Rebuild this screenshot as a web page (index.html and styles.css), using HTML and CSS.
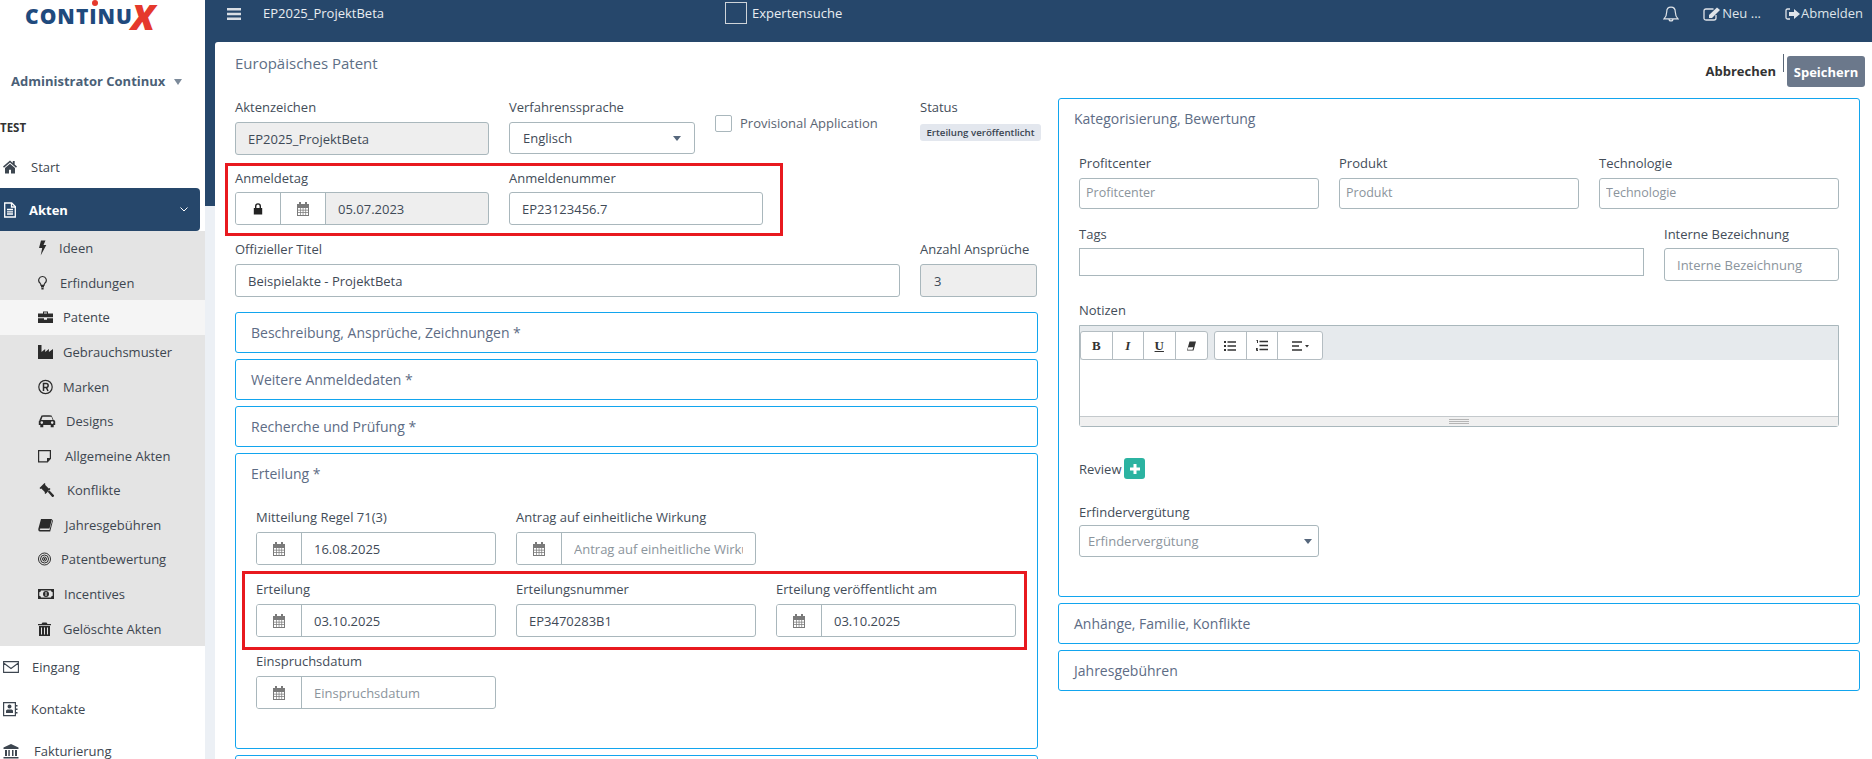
FILE: index.html
```html
<!DOCTYPE html>
<html lang="de">
<head>
<meta charset="utf-8">
<title>EP2025_ProjektBeta</title>
<link rel="stylesheet" href="styles.css">
</head>
<body>
<svg class="sprite" aria-hidden="true">
  <symbol id="cal" viewBox="0 0 12 14"><path fill="currentColor" fill-rule="evenodd" d="M2 0h2v2h4V0h2v2h2v12H0V2h2zM1 6v1.700h2V6zM3.700 6v1.700h2V6zM6.400 6v1.700h2V6zM9.100 6v1.700H11V6zM1 8.600v1.700h2V8.600zM3.700 8.600v1.700h2V8.600zM6.400 8.600v1.700h2V8.600zM9.100 8.600v1.700H11V8.600zM1 11.100V13h2v-1.900zM3.700 11.100V13h2v-1.900zM6.400 11.100V13h2v-1.900zM9.100 11.100V13H11v-1.900z"/></symbol>
  <symbol id="lock" viewBox="0 0 10 12"><path fill="currentColor" fill-rule="evenodd" d="M2 5V3.200a3 3 0 0 1 6 0V5h1.200v6.500H.8V5zM3.400 5h3.200V3.200a1.600 1.600 0 0 0-3.200 0z"/></symbol>
</svg>

<div class="app">
  <aside class="sidebar">
    <div class="logo"><span class="logo-word">CONTINU</span><span class="logo-x">X</span><i class="logo-dot"></i></div>
    <div class="user">Administrator Continux<i class="user-caret"></i></div>
    <div class="tenant">TEST</div>
    <nav class="menu">
      <a class="item"><svg class="ic" width="18" height="16" viewBox="0 0 18 16"><path fill="currentColor" d="M7 1.500 0 7.600l1 1.100L7 3.500l6 5.200 1-1.100-2.300-2V2H9.800v1.900zM2 9v5.500h4v-3.700h2v3.700h4V9L7 4.700z"/></svg><span>Start</span></a>
      <a class="item item-active"><svg class="ic" width="16" height="16" viewBox="0 0 16 16"><path fill="none" stroke="currentColor" stroke-width="1.300" d="M1.700 1h7l3.600 3.600V15H1.700z"/><path fill="none" stroke="currentColor" stroke-width="1.300" d="M8.500 1v4h4M4 7.500h6M4 9.800h6M4 12h6"/></svg><span>Akten</span><svg class="chev" width="8" height="5" viewBox="0 0 8 5"><path fill="none" stroke="currentColor" d="m.5.500 3.500 3.500 3.500-3.500"/></svg></a>
      <div class="submenu">
        <a class="sub"><svg class="ic" width="11" height="16" viewBox="0 0 11 16"><path fill="currentColor" d="M3 .500h4.500L5.500 5H8.300L2.700 15.500 4.200 8H1z"/></svg><span>Ideen</span></a>
        <a class="sub"><svg class="ic" width="12" height="16" viewBox="0 0 12 16"><path fill="none" stroke="currentColor" stroke-width="1.200" d="M4.500 1.500A3.700 3.700 0 0 0 2 8c.6.800.9 1.300 1 2.300h3c.1-1 .4-1.500 1-2.300a3.700 3.700 0 0 0-2.500-6.500z"/><path fill="currentColor" d="M3 11h3v1.500H3zM3.400 13h2.200v1.500H3.400z"/></svg><span>Erfindungen</span></a>
        <a class="sub sub-current"><svg class="ic" width="15" height="16" viewBox="0 0 15 16"><path fill="currentColor" fill-rule="evenodd" d="M5 2.500h5v2h5v3.800H0V4.500h5zM6 3.500v1h3v-1zM0 9.300h6v1.500h3V9.300h6V14H0z"/></svg><span>Patente</span></a>
        <a class="sub"><svg class="ic" width="15" height="16" viewBox="0 0 15 16"><path fill="currentColor" d="M0 1h3.500v7l3.700-3v3l3.700-3v3L15 5v10H0z"/></svg><span>Gebrauchsmuster</span></a>
        <a class="sub"><svg class="ic" width="15" height="16" viewBox="0 0 15 16"><circle cx="7.500" cy="8" r="6.700" fill="none" stroke="currentColor" stroke-width="1.200"/><path fill="none" stroke="currentColor" stroke-width="1.500" d="M5.500 12V4.500h2.700a1.900 1.900 0 0 1 0 3.900H5.500m2.800 0L10 12"/></svg><span>Marken</span></a>
        <a class="sub"><svg class="ic" width="18" height="16" viewBox="0 0 18 16"><path fill="currentColor" fill-rule="evenodd" d="M3.500 2.500c3-.5 7-.5 10 0l2 4.500H16c1 .5 1.200 1 1.200 1.700V12h-1.500v2.200h-3V12h-7.400v2.200h-3V12H.8V8.700c0-.7.200-1.200 1.200-1.700h-.5zM4.500 3.800 3.300 7h11.400l-1.200-3.200zM3.800 8.300a1.300 1.300 0 1 0 0 2.600 1.300 1.300 0 0 0 0-2.600zM14.200 8.300a1.300 1.300 0 1 0 0 2.600 1.300 1.300 0 0 0 0-2.600z"/></svg><span>Designs</span></a>
        <a class="sub"><svg class="ic" width="17" height="16" viewBox="0 0 17 16"><path fill="none" stroke="currentColor" stroke-width="1.200" d="M.6 2.600h11.800v8l-3 3.300H.6z"/><path fill="currentColor" d="M9 10h3.500L9 14z"/></svg><span>Allgemeine Akten</span></a>
        <a class="sub"><svg class="ic" width="19" height="16" viewBox="0 0 19 16"><path fill="currentColor" d="M6.500 1 1.500 6l1 1 .8-.5L7 10.200l-.5.8 1 1 5-5-1-1-.8.5L7 2.800l.5-.8zM9.500 9.500 11 8l5 5.200c.5.700-1 2.300-1.800 1.800z"/></svg><span>Konflikte</span></a>
        <a class="sub"><svg class="ic" width="17" height="16" viewBox="0 0 17 16"><path fill="currentColor" d="M3 2h11l-2.500 9.500H2.500c-1 0-1 1.500 0 1.500h9l3-10.500.5 1L12.200 14.500H2C.5 14.500 0 13 .4 11.500z"/></svg><span>Jahresgebühren</span></a>
        <a class="sub"><svg class="ic" width="13" height="16" viewBox="0 0 13 16"><g fill="none" stroke="currentColor"><circle cx="6.500" cy="8" r="6"/><circle cx="6.500" cy="8" r="4"/><circle cx="6.500" cy="8" r="2"/></g><circle cx="6.500" cy="8" r="1" fill="currentColor"/></svg><span>Patentbewertung</span></a>
        <a class="sub"><svg class="ic" width="16" height="16" viewBox="0 0 16 16"><path fill="currentColor" fill-rule="evenodd" d="M0 3h16v10H0zM3 4.500A2 2 0 0 1 1.300 6.300v3.400A2 2 0 0 1 3 11.500h10a2 2 0 0 1 1.700-1.800V6.300A2 2 0 0 1 13 4.500z"/><circle cx="8" cy="8" r="3" fill="currentColor"/><path fill="#e4e4e4" d="M7.500 6h1v4h-1z"/></svg><span>Incentives</span></a>
        <a class="sub"><svg class="ic" width="15" height="16" viewBox="0 0 15 16"><path fill="currentColor" fill-rule="evenodd" d="M4.500 1.500h4l1 1.500H13v1.200H0V3h3.500zM1 5h11v10H1zM3 6.500V13.500h1V6.500zM6 6.500V13.500h1V6.500zM9 6.500V13.500h1V6.500z"/></svg><span>Gelöschte Akten</span></a>
      </div>
      <a class="item"><svg class="ic" width="19" height="16" viewBox="0 0 19 16"><path fill="none" stroke="currentColor" stroke-width="1.100" d="M.6 2.600h14.800v10.800H.6zM.6 4l7.400 5.500L15.400 4"/></svg><span>Eingang</span></a>
      <a class="item"><svg class="ic" width="18" height="16" viewBox="0 0 18 16"><path fill="none" stroke="currentColor" stroke-width="1.200" d="M.6 1.600h11.800v13H.6z"/><path fill="currentColor" d="M4.500 5.500a2 2 0 1 1 4 0 2 2 0 0 1-4 0zM3 12V10c0-1 1-1.500 2-1.500h3c1 0 2 .5 2 1.500v2zM13 4h1.500v1.500H13zM13 7.500h1.500V9H13zM13 11h1.500v1.500H13z"/></svg><span>Kontakte</span></a>
      <a class="item"><svg class="ic" width="21" height="16" viewBox="0 0 21 16"><path fill="currentColor" d="M8 1 .5 4.500V6h15V4.500zM2 7h2v6H2zM5.300 7h1.500v6H5.300zM9 7h1.500v6H9zM12 7h2v6h-2zM.5 14h15v1.500H.5z"/></svg><span>Fakturierung</span></a>
    </nav>
  </aside>

  <div class="main">
    <header class="topbar">
      <svg class="burger" width="14" height="12" viewBox="0 0 14 12"><path fill="#d9dee4" d="M0 0h14v2.500H0zM0 4.700h14v2.500H0zM0 9.500h14V12H0z"/></svg>
      <span class="top-title">EP2025_ProjektBeta</span>
      <span class="expert"><i class="expert-box"></i>Expertensuche</span>
      <div class="top-right">
        <svg class="bell" width="16" height="17" viewBox="0 0 16 17"><path fill="none" stroke="#dfe4e9" stroke-width="1.200" d="M8 1.200c-3 0-4.300 2.300-4.300 4.800 0 3-.9 5-2.700 6.800h14c-1.800-1.800-2.700-3.800-2.700-6.800 0-2.500-1.300-4.800-4.300-4.800zM6 13c0 2.600 4 2.600 4 0"/></svg>
        <span class="top-link top-neu"><svg width="18" height="14" viewBox="0 0 18 14"><path fill="none" stroke="#dfe4e9" stroke-width="1.300" d="M10.500 2H3C1.700 2 1 2.700 1 4v7.500c0 1 .7 1.500 2 1.500h8c1.300 0 2-.5 2-2V8"/><path fill="#dfe4e9" d="m6 8 8-7.500 3 2.500-8 8H6z"/></svg>Neu ...</span>
        <span class="top-link"><svg width="15" height="14" viewBox="0 0 15 14"><path fill="none" stroke="#dfe4e9" stroke-width="1.300" d="M5 2H2.500C1.500 2 1 2.700 1 3.500v7c0 1 .5 1.500 1.500 1.500H5"/><path fill="#dfe4e9" d="M4 5h5V2l6 5-6 5V9H4z"/></svg>Abmelden</span>
      </div>
    </header>

    <section class="content">
      <div class="page-head">
        <h1 class="page-title">Europäisches Patent</h1>
        <div class="actions">
          <span class="btn-cancel">Abbrechen</span>
          <span class="divider"></span>
          <span class="btn-save">Speichern</span>
        </div>
      </div>

      <div class="columns">
        <div class="col-left">
          <div class="row row-a">
            <div class="field">
              <label class="lbl lbl-wide">Aktenzeichen</label>
              <div class="input disabled"><span class="val">EP2025_ProjektBeta</span></div>
            </div>
            <div class="field">
              <label class="lbl lbl-wide">Verfahrenssprache</label>
              <div class="input select"><span class="val">Englisch</span><i class="caret"></i></div>
            </div>
            <div class="check-field"><i class="check"></i><span class="check-text">Provisional Application</span></div>
            <div class="field">
              <label class="lbl lbl-wide">Status</label>
              <span class="badge">Erteilung veröffentlicht</span>
            </div>
          </div>

          <div class="row row-b">
            <div class="field">
              <label class="lbl">Anmeldetag</label>
              <div class="input group disabled">
                <span class="addon"><svg class="ic-lock" width="10" height="12"><use href="#lock"/></svg></span>
                <span class="addon"><svg class="ic-cal" width="12" height="14"><use href="#cal"/></svg></span>
                <span class="val">05.07.2023</span>
              </div>
            </div>
            <div class="field">
              <label class="lbl">Anmeldenummer</label>
              <div class="input"><span class="val">EP23123456.7</span></div>
            </div>
            <i class="redbox redbox-a"></i>
          </div>

          <div class="row row-c">
            <div class="field">
              <label class="lbl lbl-wide">Offizieller Titel</label>
              <div class="input"><span class="val">Beispielakte - ProjektBeta</span></div>
            </div>
            <div class="field">
              <label class="lbl lbl-wide">Anzahl Ansprüche</label>
              <div class="input disabled"><span class="val val-num">3</span></div>
            </div>
          </div>

          <div class="stack">
            <div class="panel"><div class="panel-title">Beschreibung, Ansprüche, Zeichnungen *</div></div>
            <div class="panel"><div class="panel-title">Weitere Anmeldedaten *</div></div>
            <div class="panel"><div class="panel-title">Recherche und Prüfung *</div></div>
            <div class="panel panel-grant">
              <div class="panel-title">Erteilung *</div>
              <div class="grant-body">
                <div class="grant-row">
                  <div class="field">
                    <label class="lbl lbl-wide">Mitteilung Regel 71(3)</label>
                    <div class="input group"><span class="addon"><svg class="ic-cal" width="12" height="14"><use href="#cal"/></svg></span><span class="val">16.08.2025</span></div>
                  </div>
                  <div class="field">
                    <label class="lbl lbl-wide">Antrag auf einheitliche Wirkung</label>
                    <div class="input group"><span class="addon"><svg class="ic-cal" width="12" height="14"><use href="#cal"/></svg></span><span class="val ph">Antrag auf einheitliche Wirkung</span></div>
                  </div>
                </div>
                <div class="grant-row">
                  <div class="field">
                    <label class="lbl lbl-wide">Erteilung</label>
                    <div class="input group"><span class="addon"><svg class="ic-cal" width="12" height="14"><use href="#cal"/></svg></span><span class="val">03.10.2025</span></div>
                  </div>
                  <div class="field">
                    <label class="lbl lbl-wide">Erteilungsnummer</label>
                    <div class="input"><span class="val">EP3470283B1</span></div>
                  </div>
                  <div class="field">
                    <label class="lbl lbl-wide">Erteilung veröffentlicht am</label>
                    <div class="input group"><span class="addon"><svg class="ic-cal" width="12" height="14"><use href="#cal"/></svg></span><span class="val">03.10.2025</span></div>
                  </div>
                  <i class="redbox redbox-b"></i>
                </div>
                <div class="grant-row">
                  <div class="field">
                    <label class="lbl lbl-wide">Einspruchsdatum</label>
                    <div class="input group"><span class="addon"><svg class="ic-cal" width="12" height="14"><use href="#cal"/></svg></span><span class="val ph">Einspruchsdatum</span></div>
                  </div>
                </div>
              </div>
            </div>
            <div class="panel"><div class="panel-title panel-title-empty"></div></div>
          </div>
        </div>

        <div class="col-right">
          <div class="panel panel-cat">
            <div class="panel-title">Kategorisierung, Bewertung</div>
            <div class="cat-body">
              <div class="cat-row">
                <div class="field"><label class="lbl lbl-wide">Profitcenter</label><div class="input small"><span class="val ph">Profitcenter</span></div></div>
                <div class="field"><label class="lbl lbl-wide">Produkt</label><div class="input small"><span class="val ph">Produkt</span></div></div>
                <div class="field"><label class="lbl lbl-wide">Technologie</label><div class="input small"><span class="val ph">Technologie</span></div></div>
              </div>
              <div class="tags-row">
                <div class="field"><label class="lbl">Tags</label><div class="input tags"></div></div>
                <div class="field"><label class="lbl">Interne Bezeichnung</label><div class="input"><span class="val ph">Interne Bezeichnung</span></div></div>
              </div>
              <div class="notes">
                <label class="lbl lbl-wide">Notizen</label>
                <div class="editor">
                  <div class="toolbar">
                    <div class="tb-group">
                      <span class="tb-btn tb-b">B</span>
                      <span class="tb-btn tb-i">I</span>
                      <span class="tb-btn tb-u">U</span>
                      <span class="tb-btn"><svg width="10" height="10" viewBox="0 0 10 10"><path fill="#333" d="M3.500.500H10L7.500 9.500H1z"/><path fill="#fff" d="M2.300 6.200h5l-.8 2.500H1.700z"/></svg></span>
                    </div>
                    <div class="tb-group">
                      <span class="tb-btn"><svg width="12" height="10" viewBox="0 0 12 10"><path fill="#333" d="M0 0h2v2H0zM0 4h2v2H0zM0 8h2v2H0zM3.500.300H12v1.400H3.500zM3.500 4.300H12v1.400H3.500zM3.500 8.300H12v1.400H3.500z"/></svg></span>
                      <span class="tb-btn"><svg width="12" height="11" viewBox="0 0 12 11"><path fill="#333" d="M.5 0H2v3H1V1H.5zM0 8h2v.8H1v.4h1V11H0v-.8h1v-.3H0zM3.500.800H12v1.400H3.500zM3.500 4.800H12v1.400H3.500zM3.500 8.800H12v1.400H3.500z"/></svg></span>
                      <span class="tb-btn tb-wide"><svg width="17" height="10" viewBox="0 0 17 10"><path fill="#333" d="M0 .300h10v1.400H0zM0 4.300h7v1.400H0zM0 8.300h10v1.400H0zM13 4h4l-2 2.500z"/></svg></span>
                    </div>
                  </div>
                  <div class="editor-body"></div>
                  <div class="statusbar"><i class="grip"></i></div>
                </div>
              </div>
              <div class="review"><span>Review</span><span class="add-btn"><svg width="10" height="10" viewBox="0 0 10 10"><path fill="#fff" d="M3.500 0h3v3.500H10v3H6.500V10h-3V6.500H0v-3h3.500z"/></svg></span></div>
              <div class="comp">
                <label class="lbl lbl-tight">Erfindervergütung</label>
                <div class="input select comp-select"><span class="val ph">Erfindervergütung</span><i class="caret"></i></div>
              </div>
            </div>
          </div>
          <div class="panel panel-below"><div class="panel-title">Anhänge, Familie, Konflikte</div></div>
          <div class="panel panel-below"><div class="panel-title">Jahresgebühren</div></div>
        </div>
      </div>
    </section>
  </div>
</div>
</body>
</html>
```

FILE: styles.css
```css
* { box-sizing: border-box; }
html, body { margin: 0; height: 100%; overflow: hidden; }
body { font: 13px/18px "Open Sans", "Liberation Sans", sans-serif; color: #3f4a57; background: #fff; }
.sprite { display: none; }
i { display: block; }

.app { display: flex; height: 759px; overflow: hidden; }

/* Sidebar */
.sidebar { width: 205px; flex: none; background: #fff; color: #3c3c3c; }
.logo { position: relative; height: 72px; padding: 2px 0 0 25px; display: flex; align-items: flex-start; }
.logo-word { font: 800 21px/28px "Open Sans", sans-serif; color: #1f4a7d; letter-spacing: 1px; }
.logo-x { font: italic 800 36px/28px "Open Sans", sans-serif; color: #e5392c; margin: 1px 0 0 -2px; }
.logo-dot { position: absolute; left: 92px; top: 0; width: 6px; height: 6px; border-radius: 50%; background: #e5392c; }
.user { display: flex; align-items: center; padding-left: 11px; height: 18px; font-weight: 700; color: #4b5f77; }
.user-caret { margin: 2px 0 0 9px; border: 4px solid transparent; border-top: 6px solid #7c8a9a; border-bottom: 0; }
.tenant { margin-top: 29px; height: 18px; font-size: 11.5px; font-weight: 700; color: #333; }
.menu { margin-top: 9px; }
.item { display: flex; align-items: center; height: 42px; padding-left: 3px; gap: 10px; color: #3d4650; }
.item-active { height: 43px; width: 200px; background: #26476b; color: #fff; font-weight: 700; border-radius: 0 4px 4px 0; }
.chev { margin-left: auto; margin-right: 12px; }
.ic { flex: none; }
.submenu { background: #e4e4e4; }
.sub { display: flex; align-items: center; height: 34.58px; padding-left: 38px; gap: 10px; color: #3d4650; }
.sub .ic { color: #2b2b2b; }
.sub-current { background: #f5f5f5; }

/* Main */
.main { flex: 1; display: flex; flex-direction: column; min-width: 0; background: linear-gradient(#26476b 206px, #ecf0f5 206px); }
.topbar { flex: none; height: 42px; display: flex; align-items: flex-start; color: #e9edf1; background: #26476b; padding-left: 22px; }
.burger { margin-top: 8px; }
.top-title { margin-left: 22px; line-height: 26px; }
.expert { display: flex; align-items: flex-start; line-height: 26px; margin-left: 341px; }
.expert-box { width: 22px; height: 22px; margin: 2px 5px 0 0; border: 1px solid #cfd4d9; }
.top-right { margin-left: auto; display: flex; align-items: flex-start; padding-right: 9px; }
.bell { margin-top: 6px; }
.top-link { display: flex; align-items: flex-start; line-height: 26px; color: #dfe4e9; }
.top-link svg { margin: 7px 1px 0 0; }
.top-neu { margin: 0 24px 0 24px; }

.content { flex: 1; margin-left: 10px; padding: 0 12px 0 20px; background: #fff; border-top-left-radius: 3px; overflow: hidden; }
.page-head { display: flex; justify-content: space-between; align-items: flex-start; height: 56px; }
.page-title { margin: 11px 0 0; font-size: 15px; font-weight: 400; line-height: 20px; color: #5d6f86; }
.actions { display: flex; align-items: flex-start; margin-right: -5px; margin-top: 12px; }
.btn-cancel { margin-top: 8px; font-weight: 700; color: #333; }
.divider { width: 1px; height: 18px; margin: 0 3px 0 7px; background: #5b6878; }
.btn-save { margin-top: 2px; width: 78px; height: 31px; display: flex; align-items: center; justify-content: center; background: #6b788b; color: #fff; font-weight: 700; border-radius: 3px; }

.columns { display: grid; grid-template-columns: 803px 802px; column-gap: 20px; align-items: start; }

/* Form primitives */
.field { min-width: 0; }
.lbl { display: block; height: 18px; margin-bottom: 5px; white-space: nowrap; color: #434d59; }
.lbl-wide { margin-bottom: 6px; }
.lbl-tight { margin-bottom: 4px; }
.input { display: flex; align-items: center; height: 33px; padding: 0 12px; background: #fff; border: 1px solid #a9b7bc; border-radius: 3px; color: #3f4a57; }
.val { display: block; flex: 1; min-width: 0; overflow: hidden; white-space: nowrap; }
.val-num { padding-left: 1px; }
.ph { color: #8b949c; }
.disabled { background: #eee; }
.select { justify-content: space-between; height: 32px; padding: 0 13px; }
.caret { flex: none; border: 4px solid transparent; border-top: 5px solid #56677c; border-bottom: 0; }
.group { padding: 0; overflow: hidden; }
.group .val { margin: 0 12px; }
.addon { flex: none; width: 45px; height: 100%; display: flex; align-items: center; justify-content: center; background: #fff; border-right: 1px solid #a9b7bc; }
.ic-cal { color: #7a7a7a; }
.ic-lock { color: #222; }

/* Left column rows */
.row { display: grid; gap: 20px; position: relative; }
.row-a { grid-template-columns: 254px 186px 185px 117px; height: 57px; }
.row-b { grid-template-columns: 254px 254px; margin-top: 14px; }
.row-c { grid-template-columns: 665px 117px; margin-top: 15px; }
.check-field { display: flex; align-items: center; height: 18px; margin-top: 16px; gap: 8px; color: #5a6472; white-space: nowrap; }
.check { flex: none; width: 17px; height: 17px; border: 1px solid #a9b7bc; border-radius: 2px; }
.badge { display: block; width: 121px; height: 17px; margin-top: 8px; background: #e3e7ee; border-radius: 3px; font-size: 9.7px; font-weight: 600; line-height: 17px; text-align: center; color: #3a4450; white-space: nowrap; }

.redbox { position: absolute; border: 3px solid #e8191f; pointer-events: none; }
.redbox-a { left: -10px; top: -6px; width: 558px; height: 73px; }
.redbox-b { left: -14px; top: -9px; width: 785px; bottom: -13px; }

/* Panels */
.stack { display: flex; flex-direction: column; gap: 6px; margin-top: 15px; }
.panel { background: #fff; border: 1px solid #12a5ee; border-radius: 3px; }
.panel-title { height: 39px; padding: 10px 15px 0; line-height: 20px; font-size: 14px; color: #5d6c85; white-space: nowrap; }
.panel-grant { height: 296px; }
.grant-body { padding: 15px 0 0 20px; }
.grant-row { display: grid; grid-template-columns: repeat(3, 240px); column-gap: 20px; position: relative; height: 57px; margin-bottom: 15px; }

/* Right column */
.panel-cat { height: 499px; }
.panel-below { margin-top: 6px; }
.cat-body { padding: 16px 20px 0; }
.cat-row { display: grid; grid-template-columns: repeat(3, 240px); column-gap: 20px; }
.small { height: 31px; padding: 0 6px 2px; font-size: 12.5px; }
.tags-row { display: grid; grid-template-columns: 565px 175px; column-gap: 20px; margin-top: 16px; }
.tags { height: 28px; border-radius: 0; }
.notes { margin-top: 20px; }
.editor { height: 102px; border: 1px solid #a9b7bc; border-radius: 0 0 3px 3px; display: flex; flex-direction: column; }
.toolbar { height: 34px; flex: none; display: flex; gap: 6px; padding: 5px 0 0; background: #e6eaed; }
.tb-group { display: flex; height: 29px; background: #fff; border: 1px solid #b4bdc2; border-radius: 3px; }
.tb-btn { width: 31.5px; display: flex; align-items: center; justify-content: center; border-right: 1px solid #b4bdc2; font: 700 13px/1 "Liberation Serif", serif; color: #333; }
.tb-btn:last-child { border-right: 0; }
.tb-i { font-style: italic; }
.tb-u { text-decoration: underline; }
.tb-wide { width: 44px; }
.editor-body { flex: 1; background: #fff; }
.statusbar { flex: none; height: 10px; background: #f0f0f0; border-top: 1px solid #c4c9cc; display: flex; align-items: center; justify-content: center; }
.grip { width: 20px; height: 5px; border-top: 1px solid #b5b5b5; border-bottom: 1px solid #b5b5b5; background: linear-gradient(#b5b5b5, #b5b5b5) center / 100% 1px no-repeat; }
.review { display: flex; align-items: center; gap: 3px; margin-top: 31px; height: 21px; color: #434d59; }
.add-btn { width: 21px; height: 21px; display: flex; align-items: center; justify-content: center; background: #2bb3a1; border-radius: 3px; }
.comp { margin-top: 24px; }
.comp-select { width: 240px; padding: 0 6px 0 8px; }
```
